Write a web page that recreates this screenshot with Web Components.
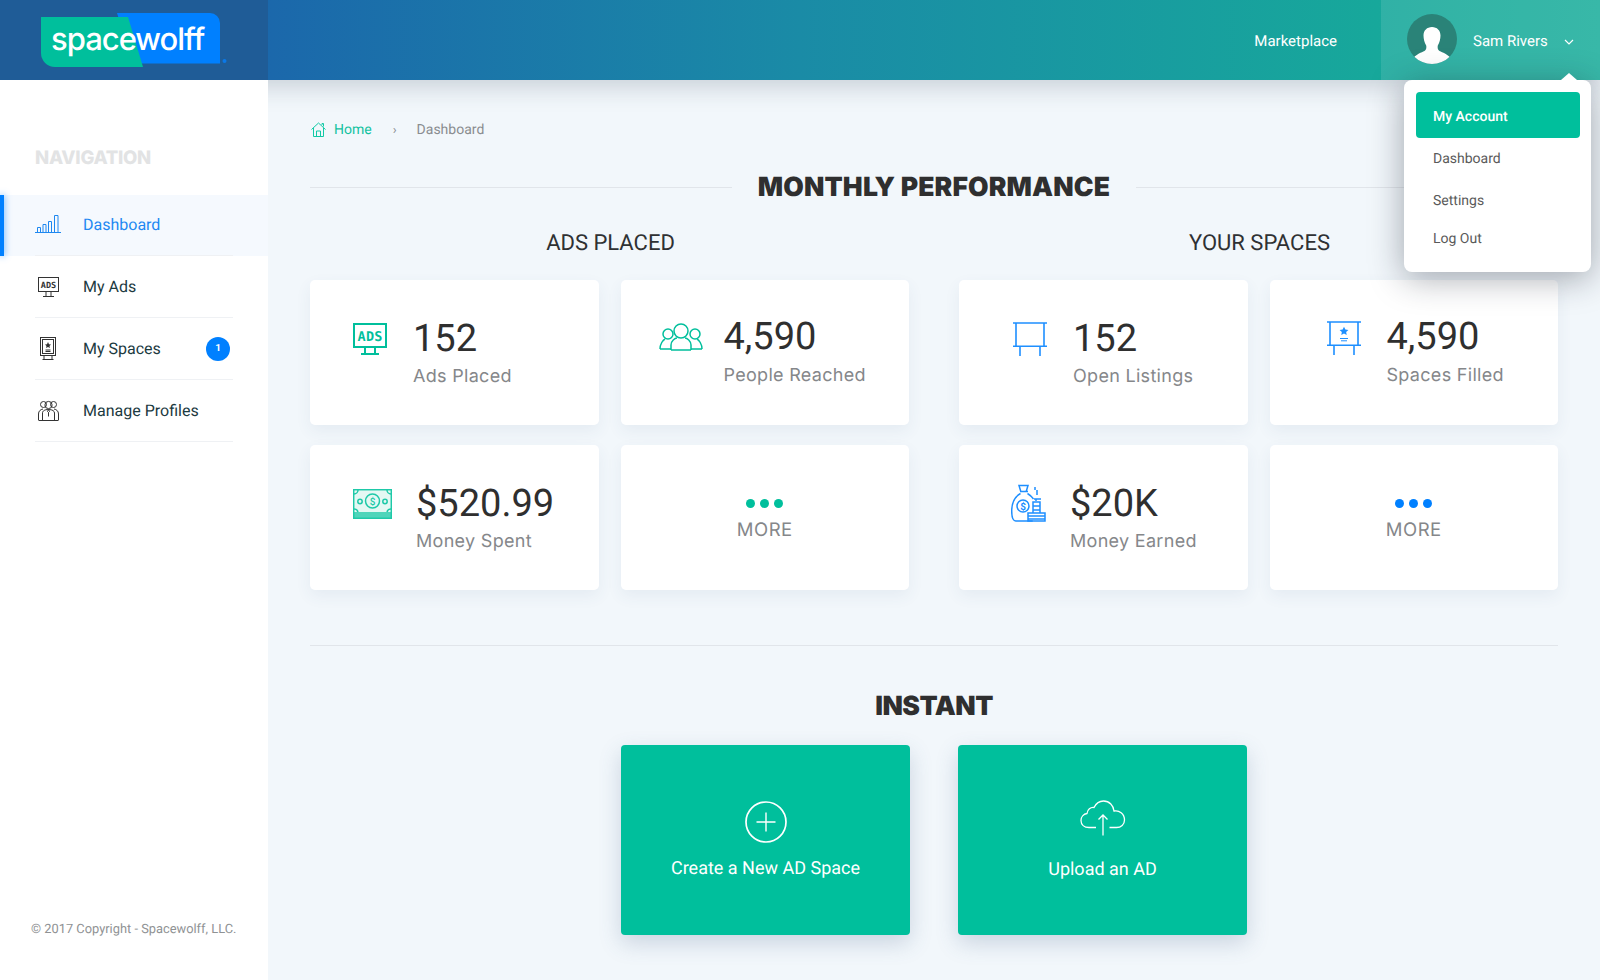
<!DOCTYPE html>
<html lang="en">
<head>
<meta charset="utf-8">
<title>Spacewolff Dashboard</title>
<style>
  html, body { margin: 0; height: 100%; overflow: hidden; background: #f2f7fb; }
  body { font-family: Roboto, "Liberation Sans", sans-serif; text-rendering: geometricPrecision; }
  .shell { display: flex; height: 900px; }
  .groups { display: grid; grid-template-columns: 1fr 1fr; gap: 50px; }
  svg { display: block; }
</style>
</head>
<body>
<sw-header>
  <sw-dropdown slot="menu">
    <sw-menu-item active>My Account</sw-menu-item>
    <sw-menu-item>Dashboard</sw-menu-item>
    <sw-menu-item>Settings</sw-menu-item>
    <sw-menu-item short>Log Out</sw-menu-item>
  </sw-dropdown>
</sw-header>
<div class="shell">
  <sw-sidebar>
    <sw-nav-item active label="Dashboard">
      <svg slot="icon" width="26" height="18" viewBox="0 0 26 18" fill="none" stroke="#1e88f0" stroke-width="1"><path d="M0 17.5h26M2.5 17.500v-5h3v5M8 17.500v-8h3v8M13.500 17.500v-11h3v11M19.500 17.500v-17h3.500v17"/></svg>
    </sw-nav-item>
    <sw-nav-item label="My Ads">
      <svg slot="icon" style="margin-left:3px" width="21" height="20" viewBox="0 0 21 20" fill="none" stroke="#333" stroke-width="1"><rect x=".5" y=".5" width="20" height="14"/><path d="M8 15v4M13 15v4M5 19.500h11"/><text x="10.500" y="10.800" font-family="DejaVu Sans Mono" font-size="8.500" font-weight="700" fill="#333" stroke="none" text-anchor="middle">ADS</text></svg>
    </sw-nav-item>
    <sw-nav-item label="My Spaces" badge="1">
      <svg slot="icon" style="margin-left:5px" width="16" height="23" viewBox="0 0 16 23" fill="none" stroke="#333" stroke-width="1"><rect x=".5" y=".5" width="15" height="18"/><rect x="2.500" y="2.500" width="11" height="14"/><path d="M8 5l1 2.200 2 .2-1.500 1.500.4 2L8 10l-1.900 1 .4-2L5 7.400l2-.2z" fill="#333" stroke="none"/><path d="M5.500 13h5M5.500 14.500h5M4 19v3M12 19v3M2.500 22.500h11"/></svg>
    </sw-nav-item>
    <sw-nav-item label="Manage Profiles">
      <svg slot="icon" style="margin-left:3px" width="21" height="21" viewBox="0 0 21 21" fill="none" stroke="#333" stroke-width="1"><circle cx="10.500" cy="5" r="3.600"/><circle cx="5.500" cy="4.500" r="3"/><circle cx="15.500" cy="4.500" r="3"/><path d="M.5 20v-6c0-3 2-4.500 4.500-5M20.500 20v-6c0-3-2-4.500-4.500-5M4.500 20v-7c0-2 2-3.500 6-3.500s6 1.500 6 3.500v7M.5 20.500h20M10.500 9.500l-1 2 1 1 1-1zM10.500 12.500v4"/></svg>
    </sw-nav-item>
  </sw-sidebar>
  <sw-main>
    <sw-breadcrumb></sw-breadcrumb>
    <sw-section-title lined>MONTHLY PERFORMANCE</sw-section-title>
    <div class="groups">
      <sw-stat-group title="ADS PLACED">
        <sw-stat-card value="152" label="Ads Placed" pad="43" lead="60" top="43">
          <svg slot="icon" width="34" height="32" viewBox="0 0 34 32" fill="none" stroke="#00bf9c" stroke-width="2"><rect x="1" y="1" width="32" height="23"/><path d="M12 24v6M22 24v6M8 31h18"/><text x="17" y="17.500" font-family="DejaVu Sans Mono" font-size="13.500" font-weight="700" fill="#00bf9c" stroke="none" text-anchor="middle" textLength="25">ADS</text></svg>
        </sw-stat-card>
        <sw-stat-card value="4,590" label="People Reached" pad="38" lead="65" top="43" up="2">
          <svg slot="icon" width="44" height="28" viewBox="0 0 44 28" fill="none" stroke="#00bf9c" stroke-width="1.500"><circle cx="22" cy="8" r="7"/><circle cx="9" cy="11" r="5"/><circle cx="36" cy="11" r="5"/><path d="M12 27v-5c0-4 4-7 6-7M32 27v-5c0-4-4-7-6-7M12 27h20M1 26c0-5 3-9 5-10M43 26c0-5-3-9-5-10M1 26h11M32 26h11"/></svg>
        </sw-stat-card>
        <sw-stat-card value="$520.99" label="Money Spent" pad="43" lead="63" top="44">
          <svg slot="icon" width="39" height="30" viewBox="0 0 39 30" fill="none" stroke="#1ec9a8" stroke-width="1.500"><rect x=".7" y=".7" width="37.600" height="28.600" fill="#e4f8f3"/><ellipse cx="19.500" cy="12" rx="7" ry="7"/><circle cx="7" cy="12.500" r="2.200"/><circle cx="32" cy="12.500" r="2.200"/><path d="M1 5a4 4 0 0 0 4-4M38 5a4 4 0 0 1-4-4M1 20a4 4 0 0 1 4 3M38 20a4 4 0 0 0-4 3"/><path d="M0 24h39M0 26h39M0 28h39" stroke-width="1.300"/><text x="19.500" y="15.500" font-family="Roboto" font-size="10" font-weight="500" fill="#1ec9a8" stroke="none" text-anchor="middle">$</text></svg>
        </sw-stat-card>
        <sw-more-card color="#00bf9c"></sw-more-card>
      </sw-stat-group>
      <sw-stat-group title="YOUR SPACES">
        <sw-stat-card value="152" label="Open Listings" pad="54" lead="60" top="42">
          <svg slot="icon" width="34" height="34" viewBox="0 0 34 34" fill="none" stroke="#1e8fff" stroke-width="1.600"><path d="M0 1h34M3 1v23M31 1v23M0 24.200h34M7 24v10M27 24v10"/></svg>
        </sw-stat-card>
        <sw-stat-card value="4,590" label="Spaces Filled" pad="57" lead="60" top="41" up="2">
          <svg slot="icon" width="34" height="34" viewBox="0 0 34 34" fill="none" stroke="#1e8fff" stroke-width="1.600"><path d="M0 1h34M3 1v23M31 1v23M0 24.200h34M7 24v10M27 24v10"/><path d="M17 5.500l1.700 3.500 3.800.5-2.800 2.600.7 3.800-3.400-1.900-3.400 1.900.7-3.800-2.800-2.600 3.800-.5z" fill="#1e8fff" stroke="none" transform="translate(3.400 1.300) scale(.8)"/><path d="M13 17.500h8M14 19.800h6" stroke-width="1"/></svg>
        </sw-stat-card>
        <sw-stat-card value="$20K" label="Money Earned" pad="52" lead="59" top="39">
          <svg slot="icon" width="35" height="38" viewBox="0 0 35 38" fill="none" stroke="#1e8fff" stroke-width="1.500"><path d="M8 1.500h9l-1.800 6h-5.400zM9 7.500h8M9.500 9.500C5 12 .7 17 .7 27c0 7 1 10 4 10h17"/><path d="M16.500 9.500C19 11 21 13 22.500 15"/><circle cx="12" cy="22" r="6"/><text x="12" y="25.500" font-family="Roboto" font-size="10" font-weight="700" fill="#1e8fff" stroke="none" text-anchor="middle">$</text><path d="M24 3v3M26 6v5M23 15h7M25 15v2M22 18h7v4h-7zM22 22h7v4h-7zM22 26h7v3h-7zM17 32h17M17 35h17M17 29h17v8H17z"/></svg>
        </sw-stat-card>
        <sw-more-card color="#0080ff"></sw-more-card>
      </sw-stat-group>
    </div>
    <sw-rule></sw-rule>
    <sw-section-title small>INSTANT</sw-section-title>
    <sw-actions>
      <sw-action-card label="Create a New AD Space">
        <svg slot="icon" width="42" height="42" viewBox="0 0 42 42" fill="none" stroke="#fff"><circle cx="21" cy="21" r="20" stroke-width="1.700"/><path d="M21 11.500v19M11.500 21h19" stroke-width="1.400"/></svg>
      </sw-action-card>
      <sw-action-card label="Upload an AD" low>
        <svg slot="icon" width="46" height="36" viewBox="0 0 46 36" fill="none" stroke="#fff" stroke-width="1.300"><path d="M16 27.500H9C4 27.500 1 24.500 1 20.500c0-3.500 2.500-6.500 6-7 .5-4 3.500-6.500 7-6 2-4 5.500-6.500 9.500-6.500 6 0 10 4.500 10.500 10 5-1 10.500 2.500 10.500 9 0 4.500-3.500 7.500-8 7.500h-7"/><path d="M23 35.500V15M18.500 19.500L23 15l4.500 4.500"/></svg>
      </sw-action-card>
    </sw-actions>
  </sw-main>
</div>

<script>
// small helper so each component only declares its styles and markup
class SwElement extends HTMLElement {
  constructor () {
    super();
    this.attachShadow({ mode: 'open' });
  }

  connectedCallback () {
    this.shadowRoot.innerHTML = `<style>${this.constructor.styles}</style>${this.markup()}`;
  }
}

class SwHeader extends SwElement {
  static get styles () {
    return /* css */ `
      :host {
        display: flex;
        position: relative;
        z-index: 3;
        height: 80px;
        background: linear-gradient(90deg, #1a5aa6 0%, #1b68ab 17%, #1a8ba6 50%, #17a89b 86%, #20b09e 100%);
        box-shadow: 0 6px 24px rgba(40, 60, 80, .22);
        color: #fff;
        font-size: 15px;
      }
      .brand { width: 268px; background: #1f5c97; flex: none; display: flex; align-items: center; }
      .brand svg { margin-left: 41px; }
      .link { margin-left: auto; margin-right: 44px; align-self: center; margin-top: 1px; }
      .user { width: 219px; display: flex; align-items: center; background: rgba(255, 255, 255, .11); position: relative; }
      .avatar { margin-left: 26px; width: 50px; height: 50px; margin-top: -2px; }
      .name { margin-left: 16px; margin-top: 1px; }
      .chev { margin-left: 16px; margin-top: 3px; }
    `;
  }

  markup () {
    return /* html */ `
      <div class="brand">
        <svg width="190" height="56" viewBox="0 0 190 56">
          <path d="M76 1h93a10 10 0 0 1 10 10v40.500H92z" fill="#0080ff"/>
          <path d="M0 5h87l15 50H14A14 14 0 0 1 0 41z" fill="#00bf9c"/>
          <circle cx="183.500" cy="49" r="2" fill="#0a78e8"/>
          <text x="10" y="38" font-family="Inter, sans-serif" font-size="31" font-weight="500" fill="#fff" letter-spacing="-1">spacewolff</text>
        </svg>
      </div>
      <div class="link">Marketplace</div>
      <div class="user">
        <svg class="avatar" viewBox="0 0 50 50">
          <circle cx="25" cy="25" r="25" fill="#2a8378"/>
          <clipPath id="av"><circle cx="25" cy="25" r="25"/></clipPath>
          <path clip-path="url(#av)" d="M25 13c5 0 8.500 3.500 8.500 8.500 0 3.500-1 7-2.700 10-.5 2 0 4.500 1.700 5.500 3 1.500 8 3 11 7v6H6.500v-6c3-4 8-5.500 11-7 1.700-1 2.200-3.500 1.700-5.500-1.700-3-2.700-6.500-2.700-10C16.500 16.500 20 13 25 13z" fill="#fff"/>
        </svg>
        <span class="name">Sam Rivers</span>
        <svg class="chev" width="10" height="6" viewBox="0 0 10 6" fill="none" stroke="#fff" stroke-width="1.200"><path d="M1 1l4 4 4-4"/></svg>
        <slot name="menu"></slot>
      </div>
    `;
  }
}

class SwDropdown extends SwElement {
  static get styles () {
    return /* css */ `
      :host {
        position: absolute;
        top: 80px;
        left: 23px;
        width: 187px;
        height: 192px;
        box-sizing: border-box;
        padding: 12px 11px 12px 12px;
        background: #fff;
        border-radius: 8px;
        box-shadow: 0 6px 34px rgba(20, 30, 45, .38);
        display: flex;
        flex-direction: column;
      }
      .tip {
        position: absolute;
        top: -7px;
        right: 14px;
        width: 0;
        height: 0;
        border: 8px solid transparent;
        border-top: 0;
        border-bottom: 7px solid #fff;
      }
    `;
  }

  markup () {
    return '<div class="tip"></div><slot></slot>';
  }
}

class SwMenuItem extends SwElement {
  static get styles () {
    return /* css */ `
      :host {
        display: flex;
        align-items: center;
        box-sizing: border-box;
        height: 42px;
        padding: 2px 0 0 17px;
        font-size: 14px;
        color: #5a5a5a;
        border-radius: 4px;
      }
      :host([active]) {
        height: 46px;
        padding-top: 4px;
        margin-bottom: -1px;
        background: #00bf9c;
        color: #fff;
        font-weight: 500;
      }
      :host([short]) { height: 34px; }
    `;
  }

  markup () {
    return '<slot></slot>';
  }
}

class SwSidebar extends SwElement {
  static get styles () {
    return /* css */ `
      :host {
        display: flex;
        flex-direction: column;
        flex: none;
        position: relative;
        z-index: 4;
        width: 268px;
        height: 900px;
        background: #fff;
      }
      h2 {
        margin: 67px 0 26px 35px;
        font: 800 18.500px/22px Inter, sans-serif;
        letter-spacing: -.25px;
        color: #e2e3e4;
      }
      footer {
        margin-top: auto;
        padding: 0 0 42px 31px;
        font-size: 12.850px;
        line-height: 16px;
        color: #8f9294;
      }
    `;
  }

  markup () {
    return /* html */ `
      <h2>NAVIGATION</h2>
      <slot></slot>
      <footer>© 2017 Copyright - Spacewolff, LLC.</footer>
    `;
  }
}

class SwNavItem extends SwElement {
  static get styles () {
    return /* css */ `
      :host { display: block; position: relative; height: 62px; font-size: 16px; color: #1c3a3f; }
      :host([active]) { height: 61px; background: #f5f9fe; color: #2288f2; }
      :host([active]) .row { padding-bottom: 2px; }
      :host([active])::before {
        content: "";
        position: absolute;
        left: 0;
        top: 0;
        bottom: 0;
        width: 4px;
        background: #0080ff;
        box-shadow: 0 0 7px rgba(0, 128, 255, .7);
      }
      .row {
        display: flex;
        align-items: center;
        height: 100%;
        box-sizing: border-box;
        margin: 0 35px;
        border-bottom: 1px solid #eff1f4;
      }
      .icon { width: 48px; flex: none; }
      .badge {
        margin-left: auto;
        margin-right: 3px;
        width: 24px;
        height: 24px;
        border-radius: 50%;
        background: #0080ff;
        color: #fff;
        font-size: 10px;
        font-weight: 700;
        display: flex;
        align-items: center;
        justify-content: center;
      }
    `;
  }

  markup () {
    const badge = this.getAttribute('badge');
    return /* html */ `
      <div class="row">
        <div class="icon"><slot name="icon"></slot></div>
        <span>${this.getAttribute('label')}</span>
        ${badge ? `<span class="badge">${badge}</span>` : ''}
      </div>
    `;
  }
}

class SwMain extends SwElement {
  static get styles () {
    return /* css */ `
      :host {
        display: block;
        flex: 1;
        box-sizing: border-box;
        padding: 0 42px;
        background: #f2f7fb;
      }
    `;
  }

  markup () {
    return '<slot></slot>';
  }
}

class SwBreadcrumb extends SwElement {
  static get styles () {
    return /* css */ `
      :host {
        display: flex;
        align-items: center;
        height: 18px;
        padding-top: 41px;
        font-size: 14px;
        color: #8a8d90;
      }
      .home { color: #12c2a0; margin-left: 8px; }
      .sep { margin: 0 20px 0 21px; font-size: 13px; }
    `;
  }

  markup () {
    return /* html */ `
      <svg width="15" height="15" viewBox="0 0 15 15" fill="none" stroke="#12c9a5" stroke-width="1" style="margin:-2px 0 0 1px"><path d="M.5 7.500L7.500 1l7 6.500M2.500 6v8.500h10V6M5.500 14.500V9h4v5.500M11 3V1.500h1.500v3"/></svg>
      <span class="home">Home</span>
      <span class="sep">›</span>
      <span>Dashboard</span>
    `;
  }
}

class SwSectionTitle extends SwElement {
  static get styles () {
    return /* css */ `
      :host {
        display: flex;
        align-items: center;
        gap: 26px;
        height: 34px;
        margin-top: 31px;
        color: #2f2f2f;
      }
      :host([small]) { justify-content: center; margin-top: 43px; }
      h1 { margin: 0; font: 900 26.500px/34px Inter, sans-serif; letter-spacing: .15px; white-space: nowrap; }
      :host([small]) h1 { letter-spacing: -.5px; }
      .line { flex: 1; height: 1px; background: #e1e5ea; }
      :host([small]) .line { display: none; }
    `;
  }

  markup () {
    return '<div class="line"></div><h1><slot></slot></h1><div class="line"></div>';
  }
}

class SwStatGroup extends SwElement {
  static get styles () {
    return /* css */ `
      :host { display: block; }
      h3 {
        margin: 23px 0 19px;
        padding-left: 2px;
        text-align: center;
        font: 400 22px/34px Roboto, sans-serif;
        color: #2f3133;
      }
      .cards { display: grid; grid-template-columns: 1fr 1fr; gap: 20px 22px; }
    `;
  }

  markup () {
    return `<h3>${this.getAttribute('title')}</h3><div class="cards"><slot></slot></div>`;
  }
}

class SwStatCard extends SwElement {
  static get styles () {
    return /* css */ `
      :host {
        display: flex;
        align-items: flex-start;
        height: 145px;
        box-sizing: border-box;
        background: #fff;
        border-radius: 5px;
        box-shadow: 0 6px 16px rgba(60, 90, 130, .07);
      }
      .value { font: 400 38px/46px Roboto, sans-serif; font-variant-numeric: tabular-nums; color: #2f2f2f; }
      .label { font: 400 18px/22px Inter, sans-serif; letter-spacing: .3px; color: #85878a; margin-top: 4px; white-space: nowrap; }
      :host([up]) .label { margin-top: 5px; }
    `;
  }

  markup () {
    const attr = name => Number(this.getAttribute(name) || 0);
    const up = attr('up');
    return /* html */ `
      <div style="margin:${attr('top')}px 0 0 ${attr('pad')}px;width:${attr('lead')}px"><slot name="icon"></slot></div>
      <div style="margin-top:${36 - up}px">
        <div class="value">${this.getAttribute('value')}</div>
        <div class="label">${this.getAttribute('label')}</div>
      </div>
    `;
  }
}

class SwMoreCard extends SwElement {
  static get styles () {
    return /* css */ `
      :host {
        display: flex;
        flex-direction: column;
        align-items: center;
        height: 145px;
        box-sizing: border-box;
        padding-top: 54px;
        background: #fff;
        border-radius: 5px;
        box-shadow: 0 6px 16px rgba(60, 90, 130, .07);
      }
      .dots { display: flex; gap: 5px; }
      .dots i { width: 9px; height: 9px; border-radius: 50%; background: var(--dot); }
      .label { font: 400 18.500px/22px Inter, sans-serif; letter-spacing: .5px; color: #85878a; margin-top: 11px; }
    `;
  }

  markup () {
    return /* html */ `
      <div class="dots" style="--dot:${this.getAttribute('color')}"><i></i><i></i><i></i></div>
      <div class="label">MORE</div>
    `;
  }
}

class SwRule extends SwElement {
  static get styles () {
    return ':host { display: block; height: 1px; margin-top: 55px; background: #e1e5ea; }';
  }

  markup () {
    return '';
  }
}

class SwActions extends SwElement {
  static get styles () {
    return ':host { display: flex; justify-content: center; gap: 48px; margin-top: 22px; }';
  }

  markup () {
    return '<slot></slot>';
  }
}

class SwActionCard extends SwElement {
  static get styles () {
    return /* css */ `
      :host {
        display: flex;
        flex-direction: column;
        align-items: center;
        width: 289px;
        height: 190px;
        box-sizing: border-box;
        padding-top: 56px;
        background: #00bf9c;
        border-radius: 4px;
        color: #fff;
        font-size: 18px;
        box-shadow: 0 8px 22px rgba(60, 90, 130, .22);
      }
      :host([low]) { padding-top: 55px; }
      .icon { height: 42px; }
      .label { margin-top: 15px; line-height: 22px; }
      :host([low]) .label { margin-top: 17px; }
    `;
  }

  markup () {
    return `<div class="icon"><slot name="icon"></slot></div><div class="label">${this.getAttribute('label')}</div>`;
  }
}

const components = {
  'sw-header': SwHeader,
  'sw-dropdown': SwDropdown,
  'sw-menu-item': SwMenuItem,
  'sw-sidebar': SwSidebar,
  'sw-nav-item': SwNavItem,
  'sw-main': SwMain,
  'sw-breadcrumb': SwBreadcrumb,
  'sw-section-title': SwSectionTitle,
  'sw-stat-group': SwStatGroup,
  'sw-stat-card': SwStatCard,
  'sw-more-card': SwMoreCard,
  'sw-rule': SwRule,
  'sw-actions': SwActions,
  'sw-action-card': SwActionCard
};
Object.entries(components).forEach(([name, cls]) => customElements.define(name, cls));
</script>
</body>
</html>
